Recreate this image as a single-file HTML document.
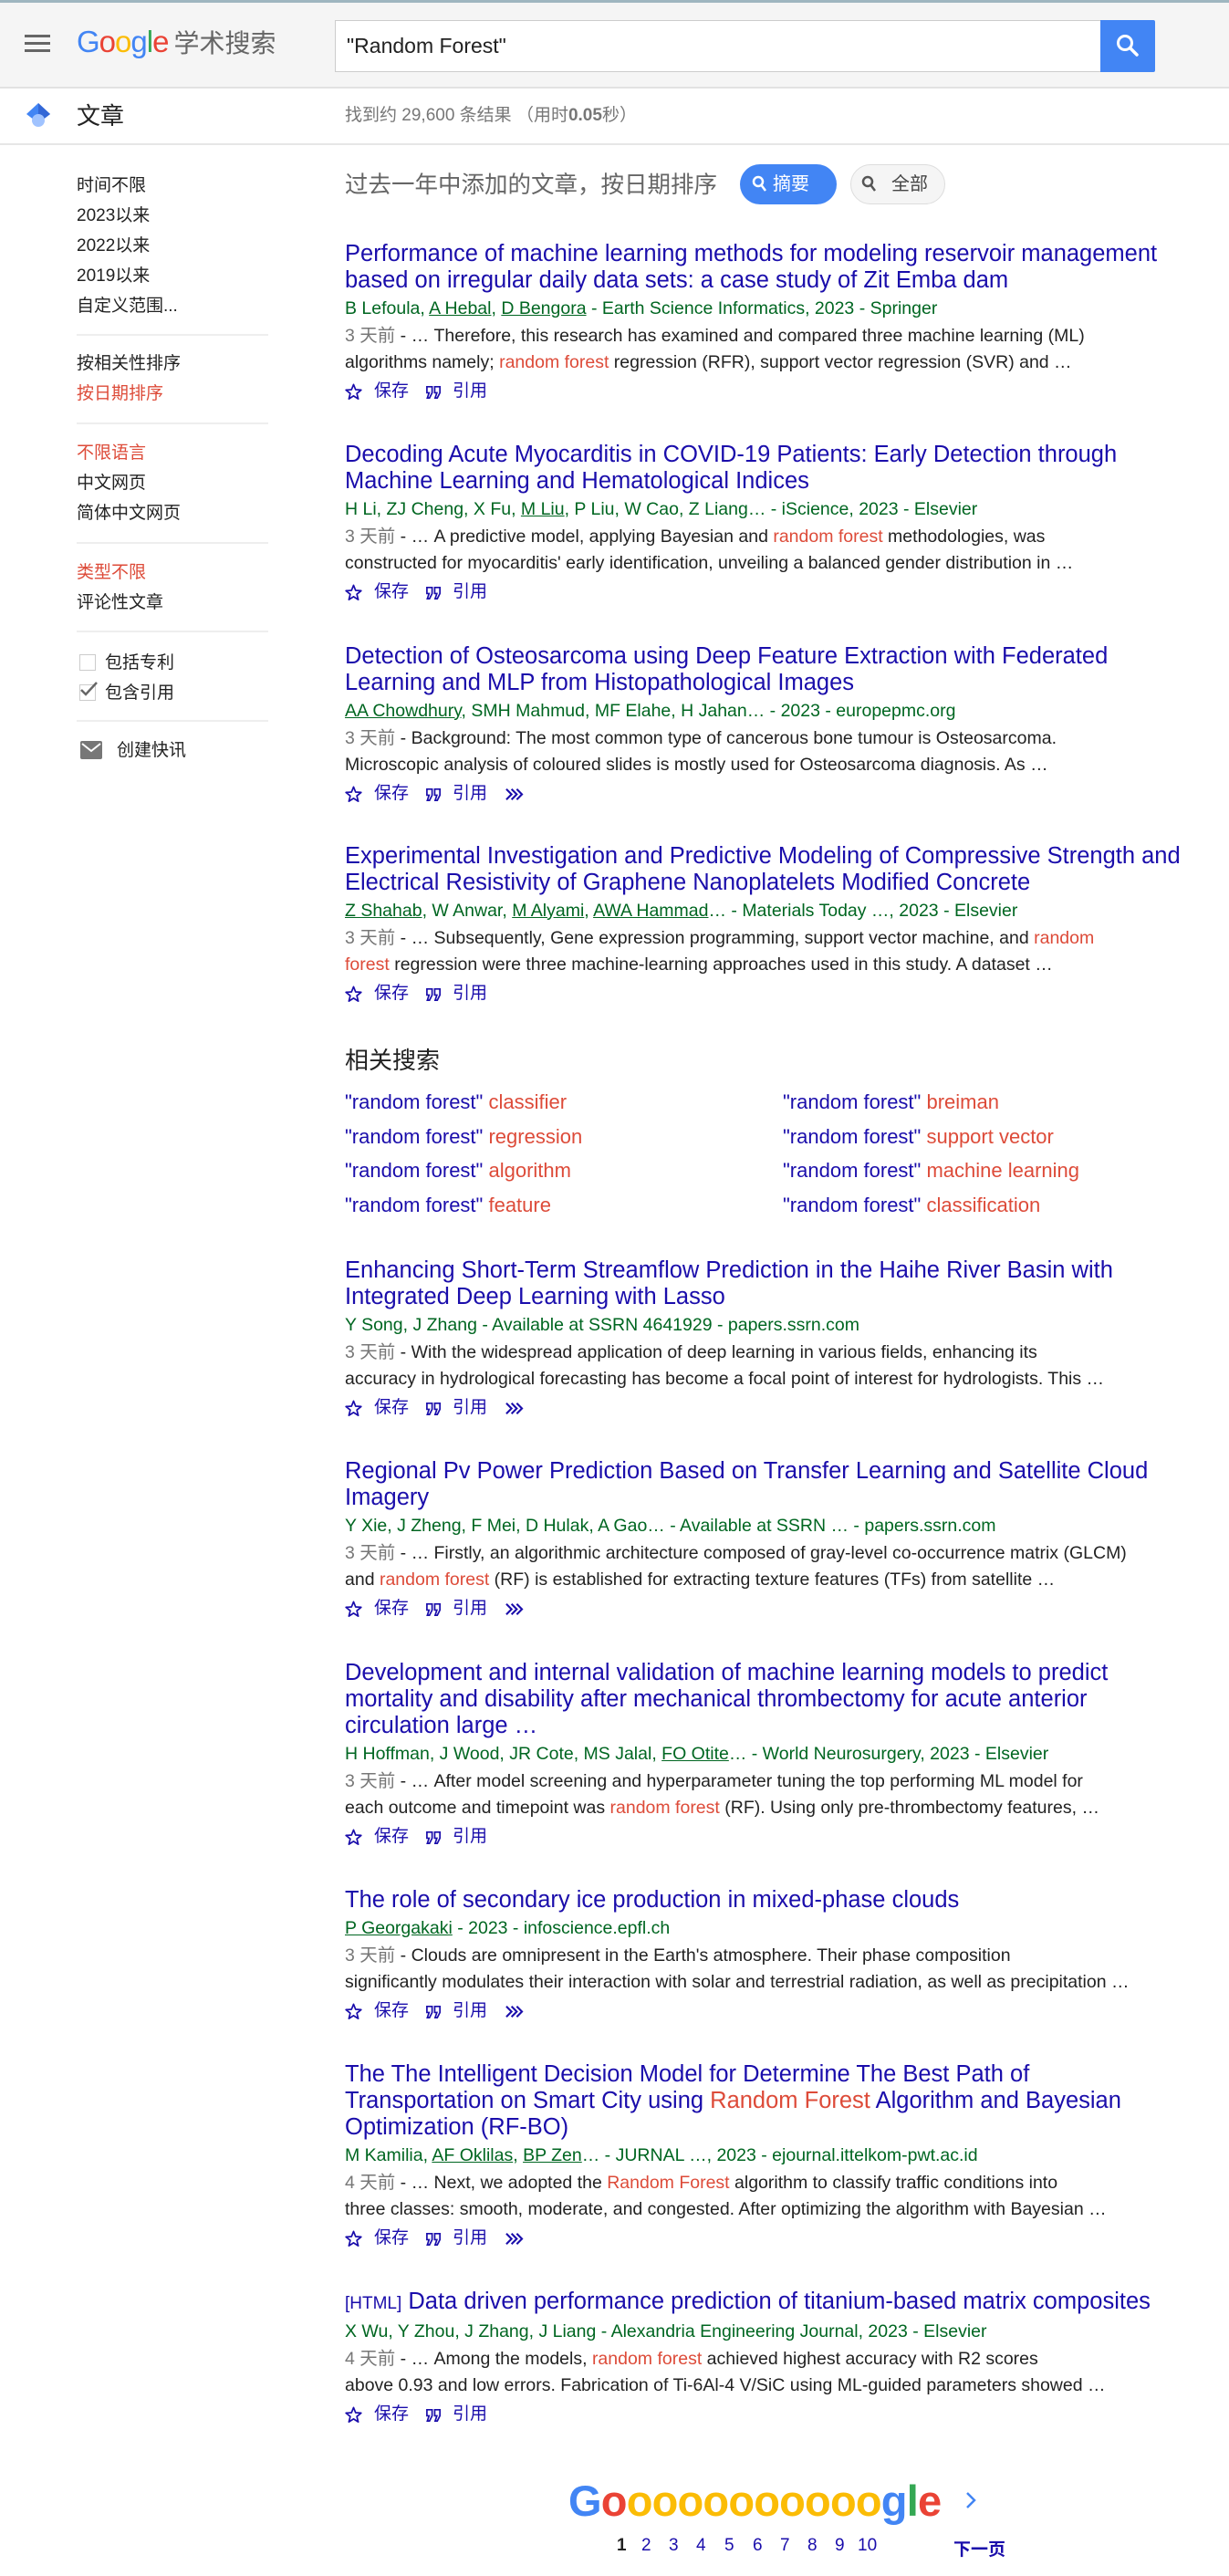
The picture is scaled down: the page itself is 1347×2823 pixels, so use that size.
<!DOCTYPE html>
<html><head><meta charset="utf-8">
<style>
*{margin:0;padding:0;box-sizing:border-box}
body{width:1347px;height:2823px;position:relative;background:#fff;font-family:"Liberation Sans","Noto Sans CJK SC",sans-serif;overflow:hidden;color:#222}
.abs{position:absolute}
#hdr{left:0;top:0;width:1347px;height:97px;background:#f5f5f5;border-top:3px solid #9fb6c0;border-bottom:2px solid #e2e2e2}
#bar2{left:0;top:97px;width:1347px;height:62px;border-bottom:2px solid #e6e6e6}
.side{left:84px;font-size:19px;line-height:33px;color:#222;white-space:nowrap}
.red{color:#dd4b39}
.div{left:84px;width:210px;height:2px;background:#eee}
.r{position:absolute;left:378px;width:960px;white-space:nowrap}
.t{font-size:25.5px;line-height:29px;color:#1a0dab}
.m{font-size:19.5px;line-height:32px;color:#006621}
.m u{text-decoration:underline}
.s{font-size:19.5px;line-height:29px;color:#222}
.s .d{color:#777}
.hl{color:#dd4b39}
.a{height:34px;font-size:19px;line-height:34px;color:#1a0dab;position:relative}
.a svg{position:absolute}
.a span{position:absolute;top:0}
.rel{font-size:22px;line-height:38px;color:#1a0dab;position:absolute;white-space:nowrap}
.pg{position:absolute;top:2779px;font-size:19px;color:#1a0dab}
</style></head><body>

<div id="hdr" class="abs"></div>
<div class="abs" style="left:27px;top:38px;width:28px;height:3px;background:#666"></div>
<div class="abs" style="left:27px;top:46px;width:28px;height:3px;background:#666"></div>
<div class="abs" style="left:27px;top:54px;width:28px;height:3px;background:#666"></div>
<div class="abs" style="left:84px;top:26px;font-size:33px;line-height:40px;letter-spacing:-1px;white-space:nowrap"><span style="color:#4285f4">G</span><span style="color:#ea4335">o</span><span style="color:#fbbc05">o</span><span style="color:#4285f4">g</span><span style="color:#34a853">l</span><span style="color:#ea4335">e</span><span style="color:#666;font-size:28px;margin-left:6px;letter-spacing:0">学术搜索</span></div>
<div class="abs" style="left:367px;top:22px;width:840px;height:57px;background:#fff;border:1px solid #ccc;border-right:none"></div>
<div class="abs" style="left:380px;top:35px;font-size:23px;line-height:30px;color:#222">"Random Forest"</div>
<div class="abs" style="left:1206px;top:22px;width:60px;height:57px;background:#4285f4;border-radius:0 2px 2px 0"></div>
<svg class="abs" style="left:1222px;top:36px" width="28" height="28" viewBox="0 0 28 28"><circle cx="11" cy="11" r="7.5" fill="none" stroke="#fff" stroke-width="3"/><path d="M16.5 16.5 L24 24" stroke="#fff" stroke-width="3.5" stroke-linecap="round"/></svg>

<div id="bar2" class="abs"></div>
<svg class="abs" style="left:26px;top:110px" width="32" height="32" viewBox="0 0 32 32"><path d="M16 3 L29 15 L16 25 L3 15 Z" fill="#4285f4"/><path d="M16 3 L29 15 L16 25 Z" fill="#3367d6"/><circle cx="16" cy="22" r="7" fill="#a0c3ff"/></svg>
<div class="abs" style="left:84px;top:109px;font-size:26px;line-height:36px;color:#222">文章</div>
<div class="abs" style="left:378px;top:114px;font-size:19px;line-height:26px;color:#777">找到约 29,600 条结果 （用时<b>0.05</b>秒）</div>

<div class="abs side" style="top:187px">时间不限<br>2023以来<br>2022以来<br>2019以来<br>自定义范围...</div>
<div class="abs div" style="top:366px"></div>
<div class="abs side" style="top:382px">按相关性排序<br><span class="red">按日期排序</span></div>
<div class="abs div" style="top:463px"></div>
<div class="abs side" style="top:480px"><span class="red">不限语言</span><br>中文网页<br>简体中文网页</div>
<div class="abs div" style="top:594px"></div>
<div class="abs side" style="top:611px"><span class="red">类型不限</span><br>评论性文章</div>
<div class="abs div" style="top:691px"></div>
<div class="abs" style="left:87px;top:717px;width:18px;height:18px;border:1px solid #ccc"></div>
<div class="abs" style="left:87px;top:750px;width:18px;height:18px;border:1px solid #ccc"></div>
<svg class="abs" style="left:86px;top:747px" width="22" height="18" viewBox="0 0 22 18"><path d="M3 9 L8 14 L20 1" fill="none" stroke="#666" stroke-width="2.5"/></svg>
<div class="abs side" style="left:115px;top:710px">包括专利<br>包含引用</div>
<div class="abs div" style="top:789px"></div>
<svg class="abs" style="left:88px;top:812px" width="24" height="20" viewBox="0 0 24 20"><rect x="0" y="0" width="24" height="20" rx="2" fill="#777"/><path d="M2 3 L12 11 L22 3" fill="none" stroke="#fff" stroke-width="2"/></svg>
<div class="abs side" style="left:128px;top:806px">创建快讯</div>

<div class="abs" style="left:378px;top:185px;font-size:25.5px;line-height:36px;color:#666;white-space:nowrap">过去一年中添加的文章，按日期排序</div>
<div class="abs" style="left:811px;top:180px;width:106px;height:44px;border-radius:22px;background:#4285f4"></div>
<svg class="abs" style="left:824px;top:192px" width="18" height="20" viewBox="0 0 18 20"><circle cx="7" cy="7" r="5" fill="none" stroke="#fff" stroke-width="2.5"/><path d="M10.5 11 L15 17" stroke="#fff" stroke-width="2.5"/></svg>
<div class="abs" style="left:847px;top:188px;font-size:20px;line-height:28px;color:#fff">摘要</div>
<div class="abs" style="left:932px;top:180px;width:104px;height:44px;border-radius:22px;background:#f5f5f5;border:1px solid #ddd"></div>
<svg class="abs" style="left:944px;top:192px" width="18" height="20" viewBox="0 0 18 20"><circle cx="7" cy="7" r="5" fill="none" stroke="#555" stroke-width="2.5"/><path d="M10.5 11 L15 17" stroke="#555" stroke-width="2.5"/></svg>
<div class="abs" style="left:977px;top:188px;font-size:20px;line-height:28px;color:#444">全部</div>

<svg width="0" height="0" style="position:absolute">
<defs>
<symbol id="star" viewBox="0 0 20 20"><path d="M10 1.5 L12.4 7.4 L18.7 7.8 L13.8 11.8 L15.4 18 L10 14.6 L4.6 18 L6.2 11.8 L1.3 7.8 L7.6 7.4 Z" fill="none" stroke="#1a0dab" stroke-width="1.8" stroke-linejoin="round"/></symbol>
<symbol id="quo" viewBox="0 0 20 20"><path d="M2 4 H8 V11 L5 17 H2.5 L4.5 11 H2 Z M11 4 H17 V11 L14 17 H11.5 L13.5 11 H11 Z" fill="none" stroke="#1a0dab" stroke-width="1.8"/></symbol>
<symbol id="chev" viewBox="0 0 22 20"><path d="M2 4 L8 10 L2 16 M8 4 L14 10 L8 16 M14 4 L20 10 L14 16" fill="none" stroke="#1a0dab" stroke-width="2.2"/></symbol>
</defs></svg>

<div class="r" style="top:263.5px">
<div class="t">Performance of machine learning methods for modeling reservoir management<br>based on irregular daily data sets: a case study of Zit Emba dam</div>
<div class="m">B Lefoula, <u>A Hebal</u>, <u>D Bengora</u> - Earth Science Informatics, 2023 - Springer</div>
<div class="s"><span class="d">3 天前</span> - … Therefore, this research has examined and compared three machine learning (ML)<br>algorithms namely; <span class="hl">random forest</span> regression (RFR), support vector regression (SVR) and …</div>
<div class="a"><svg style="left:0;top:8px" width="19" height="19"><use href="#star"/></svg><span style="left:32px">保存</span><svg style="left:88px;top:8px" width="19" height="19"><use href="#quo"/></svg><span style="left:118px">引用</span></div>
</div>

<div class="r" style="top:483.5px">
<div class="t">Decoding Acute Myocarditis in COVID-19 Patients: Early Detection through<br>Machine Learning and Hematological Indices</div>
<div class="m">H Li, ZJ Cheng, X Fu, <u>M Liu</u>, P Liu, W Cao, Z Liang… - iScience, 2023 - Elsevier</div>
<div class="s"><span class="d">3 天前</span> - … A predictive model, applying Bayesian and <span class="hl">random forest</span> methodologies, was<br>constructed for myocarditis' early identification, unveiling a balanced gender distribution in …</div>
<div class="a"><svg style="left:0;top:8px" width="19" height="19"><use href="#star"/></svg><span style="left:32px">保存</span><svg style="left:88px;top:8px" width="19" height="19"><use href="#quo"/></svg><span style="left:118px">引用</span></div>
</div>

<div class="r" style="top:704.5px">
<div class="t">Detection of Osteosarcoma using Deep Feature Extraction with Federated<br>Learning and MLP from Histopathological Images</div>
<div class="m"><u>AA Chowdhury</u>, SMH Mahmud, MF Elahe, H Jahan… - 2023 - europepmc.org</div>
<div class="s"><span class="d">3 天前</span> - Background: The most common type of cancerous bone tumour is Osteosarcoma.<br>Microscopic analysis of coloured slides is mostly used for Osteosarcoma diagnosis. As …</div>
<div class="a"><svg style="left:0;top:8px" width="19" height="19"><use href="#star"/></svg><span style="left:32px">保存</span><svg style="left:88px;top:8px" width="19" height="19"><use href="#quo"/></svg><span style="left:118px">引用</span><svg style="left:175px;top:8px" width="21" height="19"><use href="#chev"/></svg></div>
</div>

<div class="r" style="top:923.5px">
<div class="t">Experimental Investigation and Predictive Modeling of Compressive Strength and<br>Electrical Resistivity of Graphene Nanoplatelets Modified Concrete</div>
<div class="m"><u>Z Shahab</u>, W Anwar, <u>M Alyami</u>, <u>AWA Hammad</u>… - Materials Today …, 2023 - Elsevier</div>
<div class="s"><span class="d">3 天前</span> - … Subsequently, Gene expression programming, support vector machine, and <span class="hl">random</span><br><span class="hl">forest</span> regression were three machine-learning approaches used in this study. A dataset …</div>
<div class="a"><svg style="left:0;top:8px" width="19" height="19"><use href="#star"/></svg><span style="left:32px">保存</span><svg style="left:88px;top:8px" width="19" height="19"><use href="#quo"/></svg><span style="left:118px">引用</span></div>
</div>

<div class="abs" style="left:378px;top:1145px;font-size:26px;line-height:34px;color:#222">相关搜索</div>
<div class="rel" style="left:378px;top:1189px">"random forest" <span class="hl">classifier</span></div>
<div class="rel" style="left:378px;top:1227px">"random forest" <span class="hl">regression</span></div>
<div class="rel" style="left:378px;top:1264px">"random forest" <span class="hl">algorithm</span></div>
<div class="rel" style="left:378px;top:1302px">"random forest" <span class="hl">feature</span></div>
<div class="rel" style="left:858px;top:1189px">"random forest" <span class="hl">breiman</span></div>
<div class="rel" style="left:858px;top:1227px">"random forest" <span class="hl">support vector</span></div>
<div class="rel" style="left:858px;top:1264px">"random forest" <span class="hl">machine learning</span></div>
<div class="rel" style="left:858px;top:1302px">"random forest" <span class="hl">classification</span></div>

<div class="r" style="top:1377.5px">
<div class="t">Enhancing Short-Term Streamflow Prediction in the Haihe River Basin with<br>Integrated Deep Learning with Lasso</div>
<div class="m">Y Song, J Zhang - Available at SSRN 4641929 - papers.ssrn.com</div>
<div class="s"><span class="d">3 天前</span> - With the widespread application of deep learning in various fields, enhancing its<br>accuracy in hydrological forecasting has become a focal point of interest for hydrologists. This …</div>
<div class="a"><svg style="left:0;top:8px" width="19" height="19"><use href="#star"/></svg><span style="left:32px">保存</span><svg style="left:88px;top:8px" width="19" height="19"><use href="#quo"/></svg><span style="left:118px">引用</span><svg style="left:175px;top:8px" width="21" height="19"><use href="#chev"/></svg></div>
</div>

<div class="r" style="top:1597.5px">
<div class="t">Regional Pv Power Prediction Based on Transfer Learning and Satellite Cloud<br>Imagery</div>
<div class="m">Y Xie, J Zheng, F Mei, D Hulak, A Gao… - Available at SSRN … - papers.ssrn.com</div>
<div class="s"><span class="d">3 天前</span> - … Firstly, an algorithmic architecture composed of gray-level co-occurrence matrix (GLCM)<br>and <span class="hl">random forest</span> (RF) is established for extracting texture features (TFs) from satellite …</div>
<div class="a"><svg style="left:0;top:8px" width="19" height="19"><use href="#star"/></svg><span style="left:32px">保存</span><svg style="left:88px;top:8px" width="19" height="19"><use href="#quo"/></svg><span style="left:118px">引用</span><svg style="left:175px;top:8px" width="21" height="19"><use href="#chev"/></svg></div>
</div>

<div class="r" style="top:1818.5px">
<div class="t">Development and internal validation of machine learning models to predict<br>mortality and disability after mechanical thrombectomy for acute anterior<br>circulation large …</div>
<div class="m">H Hoffman, J Wood, JR Cote, MS Jalal, <u>FO Otite</u>… - World Neurosurgery, 2023 - Elsevier</div>
<div class="s"><span class="d">3 天前</span> - … After model screening and hyperparameter tuning the top performing ML model for<br>each outcome and timepoint was <span class="hl">random forest</span> (RF). Using only pre-thrombectomy features, …</div>
<div class="a"><svg style="left:0;top:8px" width="19" height="19"><use href="#star"/></svg><span style="left:32px">保存</span><svg style="left:88px;top:8px" width="19" height="19"><use href="#quo"/></svg><span style="left:118px">引用</span></div>
</div>

<div class="r" style="top:2067.5px">
<div class="t">The role of secondary ice production in mixed-phase clouds</div>
<div class="m"><u>P Georgakaki</u> - 2023 - infoscience.epfl.ch</div>
<div class="s"><span class="d">3 天前</span> - Clouds are omnipresent in the Earth's atmosphere. Their phase composition<br>significantly modulates their interaction with solar and terrestrial radiation, as well as precipitation …</div>
<div class="a"><svg style="left:0;top:8px" width="19" height="19"><use href="#star"/></svg><span style="left:32px">保存</span><svg style="left:88px;top:8px" width="19" height="19"><use href="#quo"/></svg><span style="left:118px">引用</span><svg style="left:175px;top:8px" width="21" height="19"><use href="#chev"/></svg></div>
</div>

<div class="r" style="top:2258.5px">
<div class="t">The The Intelligent Decision Model for Determine The Best Path of<br>Transportation on Smart City using <span class="hl">Random Forest</span> Algorithm and Bayesian<br>Optimization (RF-BO)</div>
<div class="m">M Kamilia, <u>AF Oklilas</u>, <u>BP Zen</u>… - JURNAL …, 2023 - ejournal.ittelkom-pwt.ac.id</div>
<div class="s"><span class="d">4 天前</span> - … Next, we adopted the <span class="hl">Random Forest</span> algorithm to classify traffic conditions into<br>three classes: smooth, moderate, and congested. After optimizing the algorithm with Bayesian …</div>
<div class="a"><svg style="left:0;top:8px" width="19" height="19"><use href="#star"/></svg><span style="left:32px">保存</span><svg style="left:88px;top:8px" width="19" height="19"><use href="#quo"/></svg><span style="left:118px">引用</span><svg style="left:175px;top:8px" width="21" height="19"><use href="#chev"/></svg></div>
</div>

<div class="r" style="top:2507.5px">
<div class="t"><span style="font-size:19px">[HTML]</span> Data driven performance prediction of titanium-based matrix composites</div>
<div class="m">X Wu, Y Zhou, J Zhang, J Liang - Alexandria Engineering Journal, 2023 - Elsevier</div>
<div class="s"><span class="d">4 天前</span> - … Among the models, <span class="hl">random forest</span> achieved highest accuracy with R2 scores<br>above 0.93 and low errors. Fabrication of Ti-6Al-4 V/SiC using ML-guided parameters showed …</div>
<div class="a"><svg style="left:0;top:8px" width="19" height="19"><use href="#star"/></svg><span style="left:32px">保存</span><svg style="left:88px;top:8px" width="19" height="19"><use href="#quo"/></svg><span style="left:118px">引用</span></div>
</div>

<div class="abs" style="left:623px;top:2712px;font-size:47px;line-height:58px;white-space:nowrap;letter-spacing:-0.8px;font-weight:bold"><span style="color:#4285f4">G</span><span style="color:#ea4335">o</span><span style="color:#fbbc05">oooooooooo</span><span style="color:#4285f4">g</span><span style="color:#34a853">l</span><span style="color:#ea4335">e</span></div>
<svg class="abs" style="left:1056px;top:2729px" width="16" height="22" viewBox="0 0 16 22"><path d="M4 3 L12 11 L4 19" fill="none" stroke="#4285f4" stroke-width="2.5"/></svg>
<div class="pg" style="left:676px;color:#222;font-weight:bold">1</div>
<div class="pg" style="left:703px">2</div>
<div class="pg" style="left:733px">3</div>
<div class="pg" style="left:763px">4</div>
<div class="pg" style="left:794px">5</div>
<div class="pg" style="left:825px">6</div>
<div class="pg" style="left:855px">7</div>
<div class="pg" style="left:885px">8</div>
<div class="pg" style="left:915px">9</div>
<div class="pg" style="left:940px">10</div>
<div class="pg" style="left:1045px;font-weight:bold">下一页</div>

</body></html>
